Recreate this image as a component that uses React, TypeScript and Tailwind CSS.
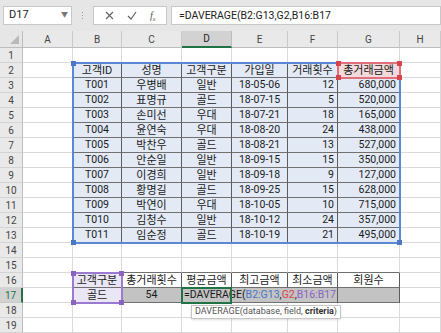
import { Fragment } from "react";

// 엑셀 DAVERAGE 화면 재현
const COLS = ["A", "B", "C", "D", "E", "F", "G", "H"];

const header = ["고객ID", "성명", "고객구분", "가입일", "거래횟수", "총거래금액"];
const rows: string[][] = [
  ["T001", "우병배", "일반", "18-05-06", "12", "680,000"],
  ["T002", "표명규", "골드", "18-07-15", "5", "520,000"],
  ["T003", "손미선", "우대", "18-07-21", "18", "165,000"],
  ["T004", "윤연숙", "우대", "18-08-20", "24", "438,000"],
  ["T005", "박찬우", "골드", "18-08-21", "13", "527,000"],
  ["T006", "안순일", "일반", "18-09-15", "15", "350,000"],
  ["T007", "이경희", "일반", "18-09-18", "9", "127,000"],
  ["T008", "황명길", "골드", "18-09-25", "15", "628,000"],
  ["T009", "박연이", "우대", "18-10-05", "10", "715,000"],
  ["T010", "김청수", "일반", "18-10-12", "24", "357,000"],
  ["T011", "임순정", "골드", "18-10-19", "21", "495,000"],
];
const header2 = ["고객구분", "총거래횟수", "평균금액", "최고금액", "최소금액", "회원수"];

function cellValue(r: number, c: number): string {
  if (r === 2 && c >= 1 && c <= 6) return header[c - 1];
  if (r >= 3 && r <= 13 && c >= 1 && c <= 6) return rows[r - 3][c - 1];
  if (r === 16 && c >= 1 && c <= 6) return header2[c - 1];
  if (r === 17 && c === 1) return "골드";
  if (r === 17 && c === 2) return "54";
  return "";
}

function cellClass(r: number, c: number, v: string) {
  const inTable = ((r >= 2 && r <= 13) || (r >= 16 && r <= 17)) && c >= 1 && c <= 6;
  const rightDark = inTable || (((r >= 2 && r <= 13) || (r >= 16 && r <= 17)) && c === 0);
  const bottomDark = inTable || ((r === 1 || r === 15) && c >= 1 && c <= 6);
  let cls = "h-[15px] border-r border-b flex items-center overflow-hidden whitespace-nowrap leading-none text-[#1a1a1a] ";
  cls += /[가-힣]/.test(v) ? "text-[11px] " : "text-[10.5px] ";
  cls += rightDark ? "border-r-[#5c5c5c] " : "border-r-[#dadada] ";
  cls += bottomDark ? "border-b-[#707070] " : "border-b-[#dadada] ";
  // 정렬: 숫자는 오른쪽
  if (r >= 3 && r <= 13 && (c === 5 || c === 6)) cls += "justify-end pr-[3px] ";
  else cls += "justify-center ";
  // 배경
  if (r === 2 && c === 6) cls += "bg-[#f2d9dc] ";
  else if (r >= 2 && r <= 13 && c >= 1 && c <= 6) cls += "bg-[#e3eaf6] ";
  else if (r >= 16 && r <= 17 && c === 1) cls += "bg-[#ebe6f5] ";
  else if (r === 17 && c >= 2 && c <= 6) cls += "bg-[#c3c3c3] ";
  return cls;
}

function Handles({ color }: { color: string }) {
  return (
    <>
      <span className={`absolute -left-[3px] -top-[3px] w-[5px] h-[5px] ${color}`} />
      <span className={`absolute -right-[3px] -top-[3px] w-[5px] h-[5px] ${color}`} />
      <span className={`absolute -left-[3px] -bottom-[3px] w-[5px] h-[5px] ${color}`} />
      <span className={`absolute -right-[3px] -bottom-[3px] w-[5px] h-[5px] ${color}`} />
    </>
  );
}

export default function App() {
  return (
    <div className="w-[441px] h-[333px] overflow-hidden bg-white font-['Roboto','Noto_Sans_CJK_KR',sans-serif]">
      {/* 수식 입력줄 */}
      <div className="h-[31px] bg-[#e6e6e6] flex items-center">
        <div className="ml-[3px] w-[69px] h-[19px] bg-white border border-[#c8c8c8] flex items-center justify-between pl-[5px] pr-[3px]">
          <span className="text-[11px] text-[#222]">D17</span>
          <span className="text-[7px] text-[#777]">▼</span>
        </div>
        <div className="ml-[10px] flex flex-col gap-[2px]">
          <span className="w-[1px] h-[1px] bg-[#999]" />
          <span className="w-[1px] h-[1px] bg-[#999]" />
          <span className="w-[1px] h-[1px] bg-[#999]" />
        </div>
        <div className="ml-[10px] w-[74px] h-[19px] bg-white border border-[#c8c8c8] flex items-center justify-around px-[4px]">
          <svg width="9" height="9" viewBox="0 0 9 9">
            <path d="M1 1L8 8M8 1L1 8" stroke="#666" strokeWidth="1.2" />
          </svg>
          <svg width="10" height="9" viewBox="0 0 10 9">
            <path d="M1 5L4 8L9 1" stroke="#666" strokeWidth="1.2" fill="none" />
          </svg>
          <span className="text-[10px] italic text-[#555] font-['Liberation_Serif',serif]">f<sub className="text-[6px]">x</sub></span>
        </div>
        <div className="ml-[4px] flex-1 h-[19px] bg-white border border-[#c8c8c8] flex items-center pl-[7px]">
          <span className="text-[10.5px] text-[#222] whitespace-nowrap">=DAVERAGE(B2:G13,G2,B16:B17</span>
        </div>
      </div>

      {/* 시트 */}
      <div className="relative grid grid-cols-[23px_50px_49px_60px_50px_56px_50px_62px_41px]">
        {/* 열 머리글 */}
        <div className="h-[17px] bg-[#e6e6e6] border-r border-b border-[#bdbdbd] relative">
          <span className="absolute right-[3px] bottom-[3px] w-0 h-0 border-l-[9px] border-l-transparent border-b-[9px] border-b-[#b9b9b9]" />
        </div>
        {COLS.map((col) => (
          <div
            key={col}
            className={
              col === "D"
                ? "h-[17px] bg-[#d2d2d2] border-r border-r-[#bdbdbd] border-b-2 border-b-[#217346] flex items-center justify-center text-[10px] text-[#262626]"
                : "h-[17px] bg-[#e9e9e9] border-r border-r-[#c9c9c9] border-b border-b-[#bdbdbd] flex items-center justify-center text-[10px] text-[#444]"
            }
          >
            {col}
          </div>
        ))}

        {Array.from({ length: 19 }, (_, i) => i + 1).map((r) => (
          <Fragment key={r}>
            <div
              className={
                r === 17
                  ? "h-[15px] bg-[#d2d2d2] border-r-2 border-r-[#217346] border-b border-b-[#c9c9c9] flex items-center justify-center text-[10px] text-[#217346]"
                  : "h-[15px] bg-[#e9e9e9] border-r border-r-[#bdbdbd] border-b border-b-[#d4d4d4] flex items-center justify-center text-[10px] text-[#444]"
              }
            >
              {r}
            </div>
            {COLS.map((_, c) => {
              if (r === 17 && (c === 4 || c === 5)) return null;
              if (r === 17 && c === 3) {
                return (
                  <div
                    key={c}
                    className="col-span-3 h-[15px] border-r border-b border-r-[#5c5c5c] border-b-[#707070] bg-[#c3c3c3] flex items-center pl-[2px] whitespace-nowrap overflow-hidden text-[10.5px] leading-none text-[#1a1a1a]"
                  >
                    <span>
                      =DAVERAGE(<span className="text-[#4a77c6]">B2:G13</span>,<span className="text-[#d6454f]">G2</span>,<span className="text-[#8a63c2]">B16:B17</span>
                    </span>
                  </div>
                );
              }
              const v = cellValue(r, c);
              return (
                <div key={c} className={cellClass(r, c, v)}>
                  {v}
                </div>
              );
            })}
          </Fragment>
        ))}

        {/* 참조 범위 표시 */}
        <div className="absolute left-[72px] top-[31px] w-[329px] h-[182px] border-2 border-[#5b87d6] pointer-events-none">
          <Handles color="bg-[#4a77c6]" />
        </div>
        <div className="absolute left-[337px] top-[31px] w-[64px] h-[17px] border-2 border-[#e0707a] pointer-events-none">
          <Handles color="bg-[#d6454f]" />
        </div>
        <div className="absolute left-[72px] top-[241px] w-[51px] h-[32px] border-2 border-[#9b7ad1] pointer-events-none">
          <Handles color="bg-[#8a63c2]" />
        </div>
        <div className="absolute left-[181px] top-[256px] w-[51px] h-[17px] border-2 border-[#217346] pointer-events-none" />

        {/* 함수 도움말 */}
        <div className="absolute left-[191px] top-[274px] h-[14px] px-[3px] bg-white border border-[#c6c6c6] shadow-sm flex items-center text-[9px] text-[#555] whitespace-nowrap">
          <span>
            DAVERAGE(database, field, <b className="font-bold text-[#333]">criteria</b>)
          </span>
        </div>
      </div>
    </div>
  );
}
